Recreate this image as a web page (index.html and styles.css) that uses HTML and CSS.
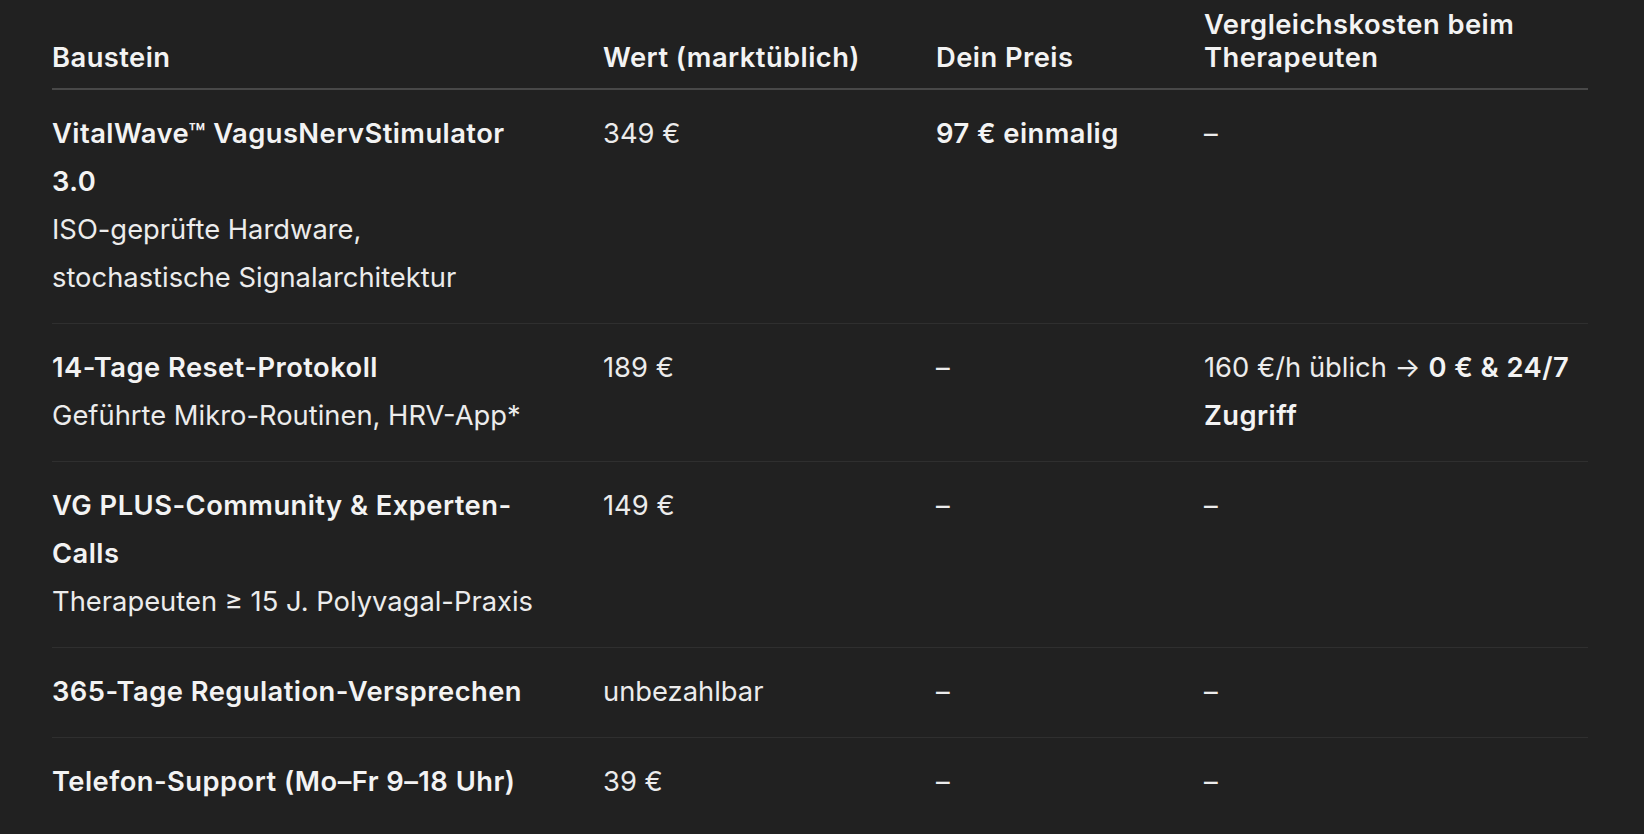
FILE: index.html
```html
<!DOCTYPE html>
<html lang="de">
<head>
<meta charset="utf-8">
<title>Preisübersicht</title>
<link rel="stylesheet" href="styles.css">
</head>
<body>
<main class="page">
  <table class="price-table">
    <colgroup>
      <col class="c-item">
      <col class="c-value">
      <col class="c-price">
      <col class="c-compare">
    </colgroup>
    <thead>
      <tr>
        <th>Baustein</th>
        <th>Wert (marktüblich)</th>
        <th>Dein Preis</th>
        <th>Vergleichskosten beim Therapeuten</th>
      </tr>
    </thead>
    <tbody>
      <tr>
        <td><strong>VitalWave™ VagusNervStimulator 3.0</strong><br>ISO-geprüfte Hardware, stochastische Signalarchitektur</td>
        <td>349 €</td>
        <td><strong>97 € einmalig</strong></td>
        <td>–</td>
      </tr>
      <tr>
        <td><strong>14-Tage Reset-Protokoll</strong><br>Geführte Mikro-Routinen, HRV-App*</td>
        <td>189 €</td>
        <td>–</td>
        <td>160 €/h üblich → <strong>0 € &amp; 24/7 Zugriff</strong></td>
      </tr>
      <tr>
        <td><strong>VG PLUS-Community &amp; Experten-Calls</strong><br>Therapeuten ≥ 15 J. Polyvagal-Praxis</td>
        <td>149 €</td>
        <td>–</td>
        <td>–</td>
      </tr>
      <tr>
        <td><strong>365-Tage Regulation-Versprechen</strong></td>
        <td>unbezahlbar</td>
        <td>–</td>
        <td>–</td>
      </tr>
      <tr>
        <td><strong>Telefon-Support (Mo–Fr 9–18 Uhr)</strong></td>
        <td>39 €</td>
        <td>–</td>
        <td>–</td>
      </tr>
    </tbody>
  </table>
</main>
</body>
</html>
```

FILE: styles.css
```css
html, body {
  margin: 0;
  padding: 0;
  background: #212121;
}

body {
  font-family: "Inter", "Noto Sans", "Liberation Sans", sans-serif;
  color: #ececec;
  font-size: 27.35px;
  overflow: hidden;
}

.page {
  padding: 0 0 0 52px;
}

.price-table {
  width: 1536px;
  table-layout: fixed;
  border-collapse: collapse;
  border-spacing: 0;
}

.c-item { width: 551px; }
.c-value { width: 333px; }
.c-price { width: 268px; }
.c-compare { width: 384px; }

.price-table th {
  text-align: left;
  font-weight: 600;
  letter-spacing: 0.45px;
  color: #f3f3f3;
  line-height: 33px;
  vertical-align: bottom;
  padding: 8px 60px 14px 0;
  border-bottom: 2px solid #484848;
}

.price-table td {
  text-align: left;
  vertical-align: top;
  line-height: 48px;
  padding: 20px 60px 21px 0;
  border-bottom: 1px solid #2f2f2f;
}

.price-table th:last-child,
.price-table td:last-child {
  padding-right: 0;
}

.price-table tbody tr:last-child td {
  border-bottom: none;
}

.price-table strong {
  font-weight: 600;
  letter-spacing: 0.45px;
  color: #f3f3f3;
}
```
